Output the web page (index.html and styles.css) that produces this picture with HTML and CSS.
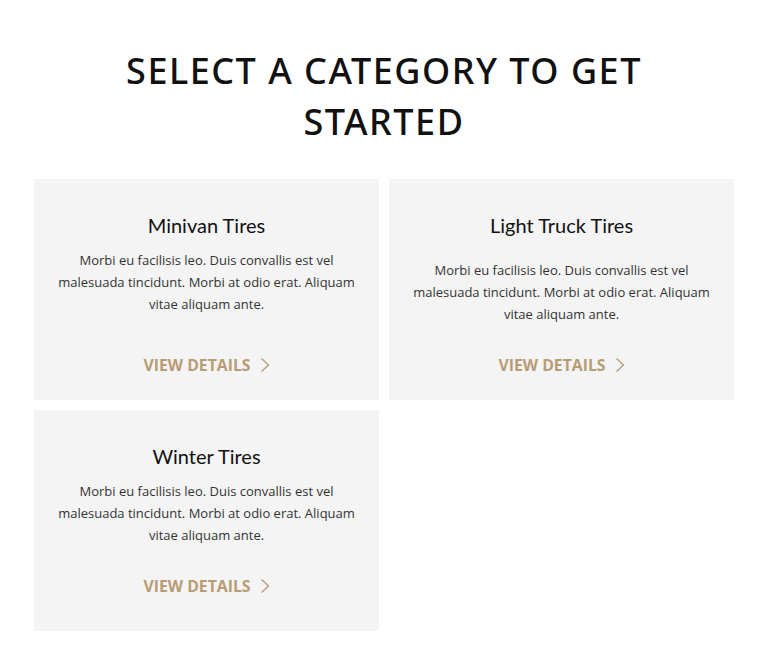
FILE: index.html
```html
<!DOCTYPE html>
<html lang="en">
<head>
  <meta charset="UTF-8">
  <title>Select a Category</title>
  <link rel="stylesheet" href="styles.css">
</head>
<body>
  <div class="categories">
    <h1>Select a category to get started</h1>

    <div class="category-grid">
      <div class="category-card low-link">
        <h3>Minivan Tires</h3>
        <p>Morbi eu facilisis leo. Duis convallis est vel malesuada tincidunt. Morbi at odio erat. Aliquam vitae aliquam ante.</p>
        <a href="#" class="view-details">View Details
          <svg width="10" height="16" viewBox="0 0 10 16"><polyline points="1.5,1.5 8.5,8 1.5,14.5" fill="none" stroke="#b89c74" stroke-width="1.3"/></svg>
        </a>
      </div>

      <div class="category-card spaced">
        <h3>Light Truck Tires</h3>
        <p>Morbi eu facilisis leo. Duis convallis est vel malesuada tincidunt. Morbi at odio erat. Aliquam vitae aliquam ante.</p>
        <a href="#" class="view-details">View Details
          <svg width="10" height="16" viewBox="0 0 10 16"><polyline points="1.5,1.5 8.5,8 1.5,14.5" fill="none" stroke="#b89c74" stroke-width="1.3"/></svg>
        </a>
      </div>

      <div class="category-card">
        <h3>Winter Tires</h3>
        <p>Morbi eu facilisis leo. Duis convallis est vel malesuada tincidunt. Morbi at odio erat. Aliquam vitae aliquam ante.</p>
        <a href="#" class="view-details">View Details
          <svg width="10" height="16" viewBox="0 0 10 16"><polyline points="1.5,1.5 8.5,8 1.5,14.5" fill="none" stroke="#b89c74" stroke-width="1.3"/></svg>
        </a>
      </div>
    </div>
  </div>
</body>
</html>
```

FILE: styles.css
```css
body {
  margin: 0;
  background-color: #fff;
  font-family: "Open Sans", Arial, sans-serif;
  color: #333;
}

.categories {
  width: 700px;
  margin: 0 auto;
  padding-top: 45px;
}

h1 {
  max-width: 560px;
  margin: 0 auto 32px;
  font-family: "Noto Sans", Arial, sans-serif;
  font-weight: 500;
  font-size: 36px;
  line-height: 51px;
  letter-spacing: 1.5px;
  text-transform: uppercase;
  text-align: center;
  color: #111;
}

.category-grid {
  display: grid;
  grid-template-columns: 1fr 1fr;
  gap: 10px;
}

.category-card {
  display: flex;
  flex-direction: column;
  align-items: center;
  min-height: 221px;
  box-sizing: border-box;
  padding: 32px 20px 23px;
  background-color: #f4f4f4;
  text-align: center;
}

.category-card h3 {
  margin: 0 0 10px;
  font-family: "Lato", Arial, sans-serif;
  font-weight: 400;
  font-size: 20px;
  line-height: 28px;
  color: #111;
}

.category-card.spaced h3 {
  margin-bottom: 20px;
}

.category-card p {
  margin: 0;
  font-size: 13px;
  line-height: 22px;
  color: #333;
}

.view-details {
  display: flex;
  align-items: center;
  gap: 9px;
  margin-top: 28px;
  font-size: 15.8px;
  line-height: 24px;
  font-weight: 700;
  text-transform: uppercase;
  text-decoration: none;
  color: #b89c74;
}

.low-link .view-details {
  margin-top: 38px;
}
```
